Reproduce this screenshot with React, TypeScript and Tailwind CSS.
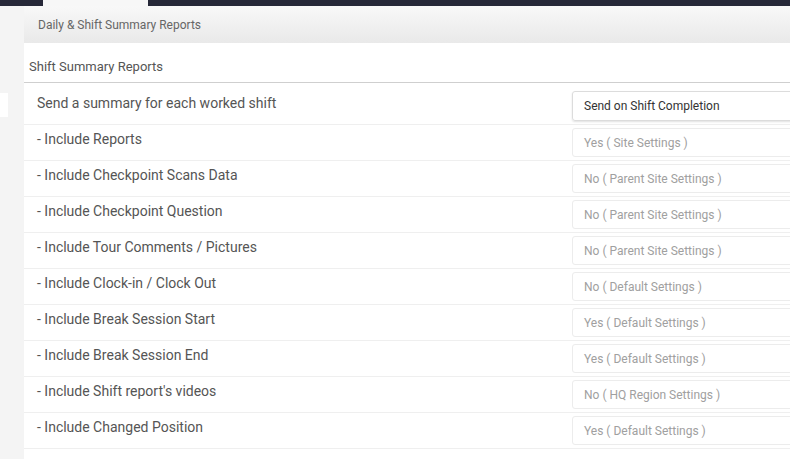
import React from 'react';

const rows: { label: string; value: string }[] = [
  { label: '- Include Reports', value: 'Yes ( Site Settings )' },
  { label: '- Include Checkpoint Scans Data', value: 'No ( Parent Site Settings )' },
  { label: '- Include Checkpoint Question', value: 'No ( Parent Site Settings )' },
  { label: '- Include Tour Comments / Pictures', value: 'No ( Parent Site Settings )' },
  { label: '- Include Clock-in / Clock Out', value: 'No ( Default Settings )' },
  { label: '- Include Break Session Start', value: 'Yes ( Default Settings )' },
  { label: '- Include Break Session End', value: 'Yes ( Default Settings )' },
  { label: "- Include Shift report's videos", value: 'No ( HQ Region Settings )' },
  { label: '- Include Changed Position', value: 'Yes ( Default Settings )' },
];

export default function App() {
  return (
    <div className="w-[790px] h-[459px] overflow-hidden bg-white font-['Roboto',sans-serif]">
      {/* top nav strip */}
      <div className="h-[6px] bg-[#262838] flex">
        <div className="ml-[43px] w-[105px] bg-[#f7f7f7]" />
      </div>

      <div className="flex h-[453px]">
        <div className="w-[24px] shrink-0 bg-[#f4f4f4]">
          <div className="mt-[87px] h-[24px] w-[8px] bg-white" />
        </div>

        <div className="flex-1 min-w-0 overflow-hidden bg-white">
          <div className="h-[37px] flex items-center pl-[14px] bg-gradient-to-b from-[#f8f8f8] to-[#e9e9e9] text-[12px] text-[#666]">
            Daily &amp; Shift Summary Reports
          </div>

          <div className="h-[40px] flex items-end pb-[7px] pl-[5px] border-b border-[#cfcfcf] text-[13px] leading-[16px] text-[#555]">
            Shift Summary Reports
          </div>

          <div className="h-[42px] flex border-b border-[#efefef]">
            <div className="w-[548px] shrink-0 pl-[13px] pt-[10px] text-[14px] leading-[20px] text-[#555]">
              Send a summary for each worked shift
            </div>
            <div className="mt-[8px] w-[240px] h-[30px] shrink-0 flex items-center pl-[11px] rounded-[3px] border border-[#dcdcdc] shadow-[0_1px_2px_rgba(0,0,0,0.12)] text-[12px] text-[#333]">
              Send on Shift Completion
            </div>
          </div>

          {rows.map((r) => (
            <div key={r.label} className="h-[36px] flex border-b border-[#efefef]">
              <div className="w-[548px] shrink-0 pl-[13px] pt-[4px] text-[14px] leading-[20px] text-[#555]">
                {r.label}
              </div>
              <div className="mt-[3px] w-[240px] h-[29px] shrink-0 flex items-center pl-[11px] rounded-[3px] border border-[#ececec] text-[12px] text-[#a0a0a0]">
                {r.value}
              </div>
            </div>
          ))}
        </div>
      </div>
    </div>
  );
}
